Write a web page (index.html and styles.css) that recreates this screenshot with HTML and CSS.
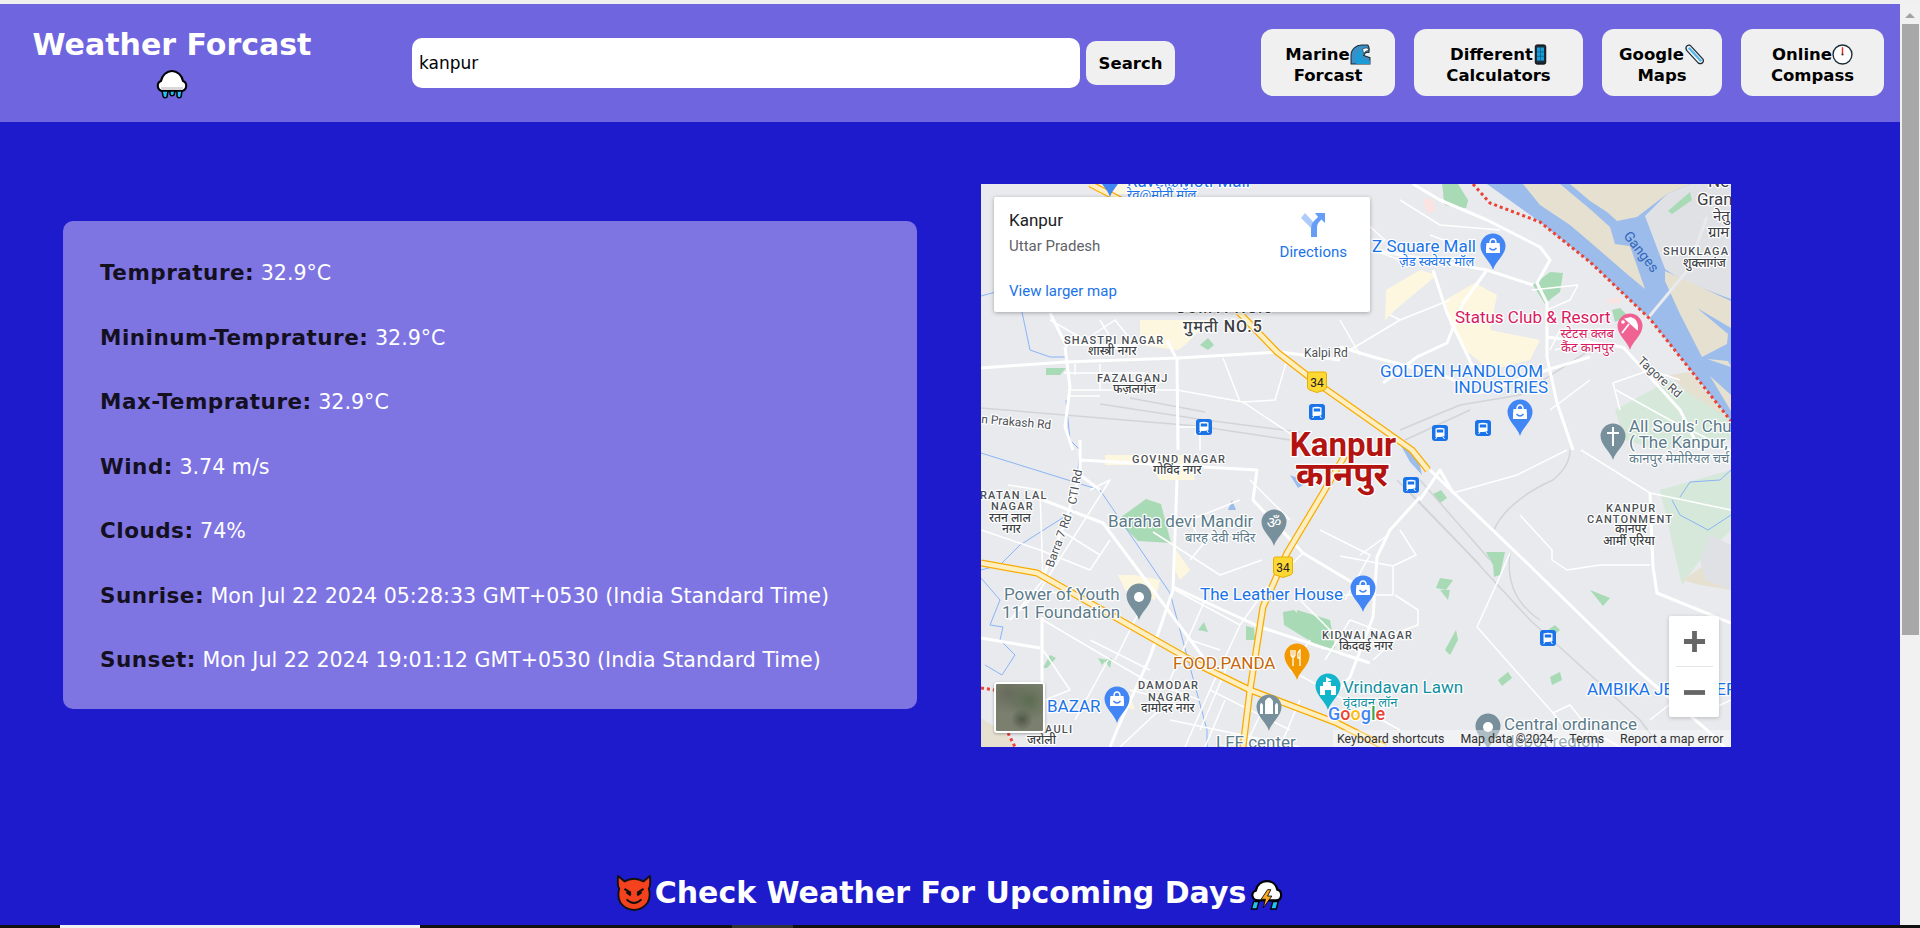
FILE: index.html
```html
<!DOCTYPE html>
<html lang="en">
<head>
    <meta charset="UTF-8">
    <meta name="viewport" content="width=device-width, initial-scale=1.0">
    <title>Weather Forcast</title>
    <link rel="stylesheet" href="styles.css">
</head>
<body>
    <!-- shared map pins -->
    <svg class="defs" width="0" height="0">
        <defs>
            <path id="pin" d="M0 24C-2 16-12.500 9-12.500 0A12.500 12.500 0 0 1 12.500 0C12.500 9 2 16 0 24Z"/>
            <g id="station">
                <rect x="-8" y="-8" width="16" height="16" rx="3" fill="#1a73e8"/>
                <path d="M-4.500-4.500Q0-6 4.500-4.500V3Q4.500 4-4.500 4Q-4.500 4-4.500 3Z" fill="#fff"/>
                <rect x="-3.200" y="-3.500" width="6.400" height="3" fill="#1a73e8"/>
                <path d="M-3 4-4.500 6M3 4 4.500 6" stroke="#fff" stroke-width="1"/>
            </g>
            <g id="shop">
                <path d="M-6.500-6H6.500L7-1.500V4H-7V-1.500Z" fill="#fff"/>
                <path d="M-3-6Q-3-10 0-10Q3-10 3-6" fill="none" stroke="#fff" stroke-width="1.500"/>
                <path d="M-3.500-1Q0 3 3.500-1" fill="none" stroke="#4285f4" stroke-width="1.400"/>
            </g>
            <g id="shield">
                <path d="M-9.500-8Q-9.500-10-7.500-10H7.500Q9.500-10 9.500-8V5Q9.500 7 7.500 8L0 10.500-7.500 8Q-9.500 7-9.500 5Z" fill="#fdd835" stroke="#e6b000"/>
            </g>
        </defs>
    </svg>

    <div class="screen">
        <div class="content">
            <header class="topbar">
                <div class="brand">
                    <h1>Weather Forcast</h1>
                    <svg class="emoji-rain" viewBox="0 0 32 30">
                        <path d="M7 21C1 21 0 13 5 11C6 5 11 1 16 1C21 1 26 5 27 11C32 13 31 21 25 21Z" fill="#fff" stroke="#000" stroke-width="2"/>
                        <path d="M5 17H27V20H5Z" fill="#d8d8d8"/>
                        <path d="M6 21H12L11 27Q8 29 7 26ZM14 21H19L18 25Q15 27 14 24ZM21 21H26L25 27Q22 29 21 26Z" fill="#20c4f0" stroke="#000" stroke-width="1.500"/>
                    </svg>
                </div>
                <form class="search">
                    <input class="search-input" type="text" value="kanpur">
                    <button class="search-btn" type="button">Search</button>
                </form>
                <nav class="links">
                    <a class="link-btn link-marine">
                        <span class="link-line">Marine<svg class="emoji" viewBox="0 0 20 20">
                            <path d="M1 19V11C1 5 6 1 11 1H17Q19 4 18 8H15L13 11L19 13V19Z" fill="#3a8fc4" stroke="#1c2b36" stroke-width="1"/>
                            <path d="M6 18C4 12 7 6 13 5Q10 9 11 13Q13 16 19 16V19H6Z" fill="#1b9bd8"/>
                            <path d="M12 5Q17 2 18 6Q15 6 13 9Z" fill="#fff" stroke="#1c2b36" stroke-width=".6"/>
                        </svg></span>
                        <span class="link-line">Forcast</span>
                    </a>
                    <a class="link-btn link-calc">
                        <span class="link-line">Different<svg class="emoji emoji-phone" viewBox="0 0 14 24">
                            <rect x="1" y="1" width="12" height="22" rx="2" fill="#1c2b36" stroke="#000"/>
                            <rect x="3" y="4" width="8" height="15" fill="#1b9bd8"/>
                            <path d="M7 4V19M3 9H11M3 14H11" stroke="#0a5f88" stroke-width=".8"/>
                        </svg></span>
                        <span class="link-line">Calculators</span>
                    </a>
                    <a class="link-btn link-maps">
                        <span class="link-line">Google<svg class="emoji" viewBox="0 0 22 22">
                            <path d="M3 2Q6 0 8 3L20 16Q21 19 19 20Q17 21 15 20L3 7Q1 4 3 2Z" fill="#eef3f6" stroke="#1c2b36" stroke-width="1.300"/>
                            <path d="M5 4 18 18" stroke="#4fb6e8" stroke-width="2.400"/>
                        </svg></span>
                        <span class="link-line">Maps</span>
                    </a>
                    <a class="link-btn link-compass">
                        <span class="link-line">Online<svg class="emoji" viewBox="0 0 20 20">
                            <circle cx="10" cy="10" r="9" fill="#fff" stroke="#1c2b36" stroke-width="1.300"/>
                            <path d="M10 3V10" stroke="#e0302a" stroke-width="1.400"/>
                            <circle cx="10" cy="10" r="1" fill="#333"/>
                        </svg></span>
                        <span class="link-line">Compass</span>
                    </a>
                </nav>
            </header>

            <main class="main">
                <section class="panel">
                    <p class="row"><b>Temprature:</b> 32.9°C</p>
                    <p class="row"><b>Mininum-Temprature:</b> 32.9°C</p>
                    <p class="row"><b>Max-Temprature:</b> 32.9°C</p>
                    <p class="row"><b>Wind:</b> 3.74 m/s</p>
                    <p class="row"><b>Clouds:</b> 74%</p>
                    <p class="row"><b>Sunrise:</b> Mon Jul 22 2024 05:28:33 GMT+0530 (India Standard Time)</p>
                    <p class="row"><b>Sunset:</b> Mon Jul 22 2024 19:01:12 GMT+0530 (India Standard Time)</p>
                </section>

                <section class="map">
                    <svg class="map-art" viewBox="981 184 750 563">
                        <rect x="981" y="184" width="750" height="563" fill="#e8eaed"/>

                        <!-- river and land -->
                        <path class="water" d="M1487 184L1540 222L1590 262L1650 319L1731 421V184Z"/>
                        <path class="sand" d="M1523 184H1560L1590 209L1610 227L1615 244L1630 246L1645 289L1627 274L1590 242L1570 225L1540 205Z"/>
                        <path class="sand" d="M1570 184H1690L1667 194L1637 217L1617 221L1607 212L1590 201Z"/>
                        <path class="land" d="M1645 216L1667 194L1690 184H1731V299L1683 281L1665 269L1662 261Z"/>
                        <path class="sand" d="M1665 271L1731 301V328L1697 308L1728 334L1727 344L1702 357L1680 314L1665 281Z"/>
                        <path class="sand" d="M1707 359L1728 361L1731 367Z"/>
                        <path class="sand" d="M1710 376L1731 395V411Z"/>
                        <path class="sand" d="M1670 375L1690 372L1725 415L1731 425L1700 405Z"/>
                        <path class="water" d="M1398 440L1417 452L1422 475L1410 462Z"/>
                        <path class="water" d="M1290 475L1308 482L1298 488Z"/>
                        <path class="water" d="M1232 500L1236 510H1228Z"/>
                        <path class="pink-patch" d="M1607 300L1618 297L1622 302L1610 304ZM1423 200L1432 198L1436 210L1427 214Z"/>

                        <!-- urban patches -->
                        <path class="urban" d="M1386 290L1420 270L1437 275L1395 310L1385 320ZM1445 300L1475 283L1497 295L1490 330L1540 340L1530 360L1490 370L1465 350L1450 325Z"/>
                        <path class="urban" d="M1090 184H1160L1175 194H1100Z"/>
                        <path class="urban" d="M1140 320H1210L1185 345L1178 350L1140 345Z"/>
                        <path class="urban" d="M1105 455H1190L1195 480H1160L1150 465H1105Z"/>
                        <path class="urban" d="M1118 575L1135 575L1160 580L1155 600L1125 590Z"/>
                        <path class="urban" d="M1176 550L1190 570L1180 580L1175 570Z"/>
                        <path class="urban" d="M1120 690L1130 695L1135 710L1120 705Z"/>
                        <path class="park-pale" d="M1615 410L1670 380L1700 400L1731 420V440L1660 450L1625 440Z"/>
                        <path class="park-pale" d="M1660 490L1731 470V530L1700 560L1682 585Z"/>
                        <path class="sand" d="M1683 580L1705 565L1731 580V590L1700 585Z"/>
                        <path class="land" d="M1700 560L1710 535L1731 545V590L1705 580Z"/>

                        <!-- parks -->
                        <path class="park" d="M1443 195L1455 184L1468 200L1466 208L1445 205Z"/>
                        <path class="park" d="M1533 285L1550 272L1563 273L1560 292L1552 298L1545 304Z"/>
                        <path class="park" d="M1117 520L1146 499L1161 504L1171 543L1138 541Z"/>
                        <path class="park" d="M1283 612L1294 610L1340 655L1325 650L1284 625Z"/>
                        <path class="park" d="M1297 610L1330 620L1335 648L1298 630Z"/>
                        <path class="park" d="M1486 552L1505 552L1500 575L1494 577L1493 565Z"/>
                        <path class="park" d="M1440 578L1453 580L1446 590L1436 588Z"/>
                        <path class="park" d="M1440 590L1450 590L1448 600Z"/>
                        <path class="park" d="M1590 590L1610 598L1603 606Z"/>
                        <path class="park" d="M1433 494L1441 490L1447 498L1440 503Z"/>
                        <path class="park" d="M1445 650L1456 630L1458 640L1450 655Z"/>
                        <path class="park" d="M1555 625L1560 630L1552 637L1545 632Z"/>
                        <path class="park" d="M1498 680L1508 672L1512 678L1502 686Z"/>
                        <path class="park" d="M1550 677L1560 672L1562 680L1552 685Z"/>
                        <path class="park" d="M1043 668L1050 655L1056 658L1047 668Z"/>
                        <path class="park" d="M1104 660L1112 658L1110 668Z"/>
                        <path class="park" d="M1098 658L1106 660L1102 665Z"/>
                        <path class="park" d="M1198 630L1204 622L1208 632Z"/>
                        <path class="park" d="M1246 640L1255 640L1254 628L1246 626Z"/>
                        <path class="park" d="M1046 368H1066L1060 375H1046Z"/>
                        <path class="park" d="M1200 345L1208 338L1214 345L1208 350Z"/>
                        <path class="park" d="M1442 184H1458L1468 200L1466 208L1445 205Z"/>
                        <path class="park" d="M1668 211L1690 192L1692 200L1672 214Z"/>
                        <path class="park" d="M1612 310L1620 308L1628 316L1615 322Z"/>

                        <!-- railway -->
                        <g class="rail">
                            <path d="M981 408L1197 426L1290 440"/>
                            <path d="M1100 404L1205 420L1300 432"/>
                            <path d="M1130 398L1205 412"/>
                            <path d="M1397 480L1470 555L1530 620L1640 720L1660 747"/>
                            <path d="M1403 485L1480 565"/>
                            <path d="M1420 480L1490 560"/>
                            <path d="M1493 533C1500 510 1530 490 1553 480C1565 470 1570 460 1570 450"/>
                            <path d="M1510 553C1505 590 1525 610 1540 620"/>
                            <path d="M1400 430L1460 405L1520 395L1590 350"/>
                            <path d="M1405 440L1470 410"/>
                        </g>

                        <!-- thin streams -->
                        <g class="stream">
                            <path d="M981 296L1003 290M1022 312L1030 350L1050 357H1067"/>
                            <path d="M1066 400L1070 440L1080 450L1078 470"/>
                            <path d="M981 453L1100 490L1170 593L1207 730V747"/>
                            <path d="M1075 510L1020 545L1000 565L981 570"/>
                            <path d="M981 578L1000 600L990 625L1003 627L1000 640L1015 655L1002 675L985 665"/>
                            <path d="M1680 497L1690 482L1720 480L1731 470M1672 500L1680 515L1708 530L1731 515"/>
                        </g>

                        <!-- streets -->
                        <g class="road">
                            <path d="M981 368L1065 362L1178 358L1280 352L1340 360"/>
                            <path d="M1065 347L1070 387L1065 427L1073 450"/>
                            <path d="M1167 340L1177 360L1178 450"/>
                            <path d="M1050 313L1067 347"/>
                            <path d="M1413 184L1440 200L1487 220L1540 247L1550 260L1537 283L1547 303L1547 357L1557 403L1573 450"/>
                            <path d="M1373 250L1487 270L1533 285"/>
                            <path d="M1487 270L1463 303L1447 343L1417 357L1383 383"/>
                            <path d="M1433 270L1447 313L1473 367"/>
                            <path d="M1340 347L1377 358L1447 377L1480 393L1547 370L1590 357"/>
                            <path d="M1623 347L1680 410L1700 450"/>
                            <path d="M1547 337L1623 347"/>
                            <path d="M1430 470L1527 563L1637 670L1707 730L1725 747"/>
                            <path d="M1420 497L1390 530L1377 557L1373 617L1350 677L1330 700"/>
                            <path d="M1650 493L1653 567L1657 593L1731 623"/>
                            <path d="M1177 480L1173 590L1150 657L1117 730L1110 747"/>
                            <path d="M1043 500L1103 523L1203 657"/>
                            <path d="M1173 587L1260 627L1370 663"/>
                            <path d="M1043 577L1067 517L1080 473"/>
                            <path d="M1080 460L1257 470L1253 500L1303 553L1370 593"/>
                            <path d="M1080 440V475L1100 490"/>
                            <path d="M1042 617V730"/>
                            <path d="M981 638L1040 648"/>
                            <path d="M1420 500L1440 470L1453 493"/>
                        </g>
                        <path class="bridge" d="M1643 324L1687 271L1707 217"/>
                        <g class="road-thin">
                            <path d="M1070 390H1177L1243 402L1300 440"/>
                            <path d="M1064 373H1145M1070 396H1100M1100 364V390M1075 364V375"/>
                            <path d="M1223 358L1240 402M1287 360L1275 400L1243 402"/>
                            <path d="M1177 427H1198L1195 435M1200 450V430"/>
                            <path d="M1050 320L1085 340L1115 320L1135 345M1070 345H1135M1100 320L1115 345"/>
                            <path d="M1340 200L1385 240L1373 250L1400 260M1400 200L1440 225L1500 230M1430 235L1470 250"/>
                            <path d="M1400 320L1350 350M1340 320L1360 355M1450 300L1400 320L1390 315"/>
                            <path d="M1532 290L1578 285L1570 300L1547 310M1555 350L1590 340M1560 330L1550 350"/>
                            <path d="M1613 383L1650 370L1680 380M1616 390L1670 420L1731 450M1550 410L1590 380M1613 383L1620 410"/>
                            <path d="M1453 493L1517 475L1567 450M1581 450L1650 493M1650 493L1731 510"/>
                            <path d="M1477 627L1497 583L1510 553M1477 627L1553 713L1567 730M1520 515L1552 550V560L1567 570L1600 565L1650 565"/>
                            <path d="M1340 556L1393 566L1416 555L1400 530M1393 566V595H1340M1395 595L1418 610V625L1390 635L1350 620M1400 635L1373 660"/>
                            <path d="M1553 713L1570 705L1590 730L1570 747M1650 720L1675 700M1590 730L1620 747M1700 715L1731 700"/>
                            <path d="M1090 490L1110 480L1040 590M1008 485L1040 490L1043 580L1010 620"/>
                            <path d="M981 530L1040 550L1090 570L1110 540M1060 530L1100 555M1040 590L1095 600M1010 620L1040 590"/>
                            <path d="M1043 620L1145 680L1200 700M1043 650L1070 690L1045 700M1090 640L1150 670M1108 660L1075 720M1140 610L1115 660"/>
                            <path d="M1175 590L1240 625L1210 690L1185 747M1205 600L1170 680M1240 625L1265 590L1303 553M1190 640L1220 650M1230 660L1200 730"/>
                            <path d="M1210 690L1290 730M1225 700L1205 747M1260 715L1245 747M1300 700L1280 747M1290 670L1400 730M1310 640L1290 670M1350 620L1325 660"/>
                            <path d="M1240 500L1190 520L1200 540M1320 530L1370 555L1345 600M1360 555L1388 535M1300 600L1340 640"/>
                            <path d="M1153 532L1220 575L1262 560M1215 530L1190 560M1290 520L1250 480"/>
                            <path d="M1130 690L1170 700L1120 747M1170 720L1300 747"/>
                        </g>

                        <!-- red border dots -->
                        <path class="border" d="M1473 184L1490 203L1540 222L1590 262L1650 319L1731 421"/>
                        <path class="sand" d="M981 718L1005 733L1015 747H981Z"/>
                        <path class="border" d="M981 688L1002 691L1005 712M1008 733L1015 747"/>

                        <!-- highways -->
                        <g class="hw-out">
                            <path d="M1090 184L1140 210L1277 352L1317 383L1412 450L1428 470"/>
                            <path d="M1243 747L1250 690L1263 607L1287 553L1323 493L1345 455"/>
                            <path d="M981 563L1037 573L1203 667L1250 690L1337 723L1385 747"/>
                        </g>
                        <g class="hw-in">
                            <path d="M1090 184L1140 210L1277 352L1317 383L1412 450L1428 470"/>
                            <path d="M1243 747L1250 690L1263 607L1287 553L1323 493L1345 455"/>
                            <path d="M981 563L1037 573L1203 667L1250 690L1337 723L1385 747"/>
                        </g>

                        <!-- labels under the card -->
                        <text class="lab-blue" x="1127" y="187">Rave@Moti Mall</text>
                        <text class="lab-blue-sm" x="1127" y="199">रेव@मोती मॉल</text>
                        <text class="lab-hood-lg" x="1175" y="313">GUMTI NO.5</text>
                        <text class="lab-hood-lg" x="1183" y="332">गुमती NO.5</text>
                        <use href="#pin" x="1110" y="173" class="pin-blue"/>
                        <use href="#shop" x="1110" y="176"/>

                        <!-- neighbourhood labels -->
                        <text class="lab-hood" x="1064" y="344">SHASTRI NAGAR</text>
                        <text class="lab-hood-hi" x="1088" y="355">शास्त्री नगर</text>
                        <text class="lab-hood" x="1097" y="382">FAZALGANJ</text>
                        <text class="lab-hood-hi" x="1113" y="393">फज़लगंज</text>
                        <text class="lab-road" x="981" y="423" transform="rotate(5 981 423)">n Prakash Rd</text>
                        <text class="lab-road" x="1304" y="357">Kalpi Rd</text>
                        <text class="lab-hood" x="1132" y="463">GOVIND NAGAR</text>
                        <text class="lab-hood-hi" x="1153" y="474">गोविंद नगर</text>
                        <text class="lab-hood" x="980" y="499">RATAN LAL</text>
                        <text class="lab-hood" x="991" y="510">NAGAR</text>
                        <text class="lab-hood-hi" x="989" y="522">रतन लाल</text>
                        <text class="lab-hood-hi" x="1002" y="533">नगर</text>
                        <text class="lab-road" x="1053" y="568" transform="rotate(-70 1053 568)">Barra 7 Rd</text>
                        <text class="lab-road" x="1076" y="505" transform="rotate(-80 1076 505)">CTI Rd</text>
                        <text class="lab-hood" x="1322" y="639">KIDWAI NAGAR</text>
                        <text class="lab-hood-hi" x="1339" y="650">किदवई नगर</text>
                        <text class="lab-hood" x="1138" y="689">DAMODAR</text>
                        <text class="lab-hood" x="1148" y="701">NAGAR</text>
                        <text class="lab-hood-hi" x="1141" y="712">दामोदर नगर</text>
                        <text class="lab-hood" x="1045" y="733">AULI</text>
                        <text class="lab-hood-hi" x="1027" y="744">जरोली</text>
                        <text class="lab-hood" x="1606" y="512">KANPUR</text>
                        <text class="lab-hood" x="1587" y="523">CANTONMENT</text>
                        <text class="lab-hood-hi" x="1615" y="533">कानपुर</text>
                        <text class="lab-hood-hi" x="1603" y="545">आर्मी एरिया</text>
                        <text class="lab-hood" x="1663" y="255">SHUKLAGA</text>
                        <text class="lab-hood-hi" x="1683" y="267">शुक्लागंज</text>
                        <text class="lab-road" x="1637" y="362" transform="rotate(42 1637 362)">Tagore Rd</text>
                        <text class="lab-river" x="1623" y="236" transform="rotate(52 1623 236)">Ganges</text>
                        <text class="lab-dark" x="1708" y="187">Ne</text>
                        <text class="lab-dark" x="1697" y="205">Gran</text>
                        <text class="lab-dark-sm" x="1713" y="221">नेतु</text>
                        <text class="lab-dark-sm" x="1708" y="237">ग्राम</text>

                        <!-- places -->
                        <text class="lab-blue" x="1372" y="252">Z Square Mall</text>
                        <text class="lab-blue-sm" x="1399" y="266">ज़ेड स्क्वेयर मॉल</text>
                        <use href="#pin" x="1493" y="246" class="pin-blue"/>
                        <use href="#shop" x="1493" y="249"/>

                        <text class="lab-pink" x="1455" y="323">Status Club &amp; Resort</text>
                        <text class="lab-pink-sm" x="1614" y="338" text-anchor="end">स्टेटस क्लब</text>
                        <text class="lab-pink-sm" x="1614" y="352" text-anchor="end">कैंट कानपुर</text>
                        <use href="#pin" x="1630" y="326" class="pin-pink"/>
                        <path d="M1622 333L1629 324M1626 319L1637 329Q1638 320 1631 318Z" stroke="#fff" stroke-width="1.800" fill="#fff"/>
                        <circle cx="1623" cy="322" r="1.800" fill="#fff"/>

                        <text class="lab-blue" x="1380" y="377">GOLDEN HANDLOOM</text>
                        <text class="lab-blue" x="1548" y="393" text-anchor="end">INDUSTRIES</text>
                        <use href="#pin" x="1520" y="412" class="pin-blue"/>
                        <use href="#shop" x="1520" y="415"/>

                        <text class="lab-slate" x="1629" y="432">All Souls' Chu</text>
                        <text class="lab-slate" x="1629" y="448">( The Kanpur,</text>
                        <text class="lab-slate-sm" x="1629" y="463">कानपुर मेमोरियल चर्च</text>
                        <use href="#pin" x="1613" y="436" class="pin-slate"/>
                        <path d="M1613 427V446M1607 433H1619" stroke="#fff" stroke-width="2"/>

                        <text class="lab-city" x="1343" y="456" text-anchor="middle">Kanpur</text>
                        <text class="lab-city" x="1342" y="486" text-anchor="middle">कानपुर</text>

                        <text class="lab-slate" x="1108" y="527">Baraha devi Mandir</text>
                        <text class="lab-slate-sm" x="1185" y="542">बारह देवी मंदिर</text>
                        <use href="#pin" x="1274" y="522" class="pin-slate"/>
                        <text class="pin-om" x="1274" y="528" text-anchor="middle">ॐ</text>

                        <text class="lab-slate" x="1004" y="600">Power of Youth</text>
                        <text class="lab-slate" x="1002" y="618">111 Foundation</text>
                        <use href="#pin" x="1139" y="596" class="pin-slate"/>
                        <circle cx="1139" cy="597" r="5" fill="#fff"/>

                        <text class="lab-blue" x="1200" y="600">The Leather House</text>
                        <use href="#pin" x="1363" y="588" class="pin-blue"/>
                        <use href="#shop" x="1363" y="591"/>

                        <text class="lab-orange" x="1173" y="669">FOOD.PANDA</text>
                        <use href="#pin" x="1297" y="656" class="pin-orange"/>
                        <path d="M1293 650V656M1291 650V654Q1291 657 1293 657Q1295 657 1295 654V650M1293 657V666M1300 650Q1297 652 1298 658H1300ZM1300 650V666" stroke="#fff" stroke-width="1.300" fill="none"/>

                        <text class="lab-teal" x="1343" y="693">Vrindavan Lawn</text>
                        <text class="lab-teal-sm" x="1343" y="707">वृंदावन लॉन</text>
                        <use href="#pin" x="1328" y="686" class="pin-teal"/>
                        <path d="M1320 695V686H1323V682H1326V677L1332 680L1327 682H1331V686H1336V695H1331V690H1325V695Z" fill="#fff"/>

                        <text class="lab-blue" x="1047" y="712">BAZAR</text>
                        <use href="#pin" x="1117" y="699" class="pin-blue"/>
                        <use href="#shop" x="1117" y="702"/>

                        <use href="#pin" x="1269" y="707" class="pin-slate"/>
                        <path d="M1260 714V705Q1261 701 1263 705V714ZM1265 714V701Q1269 694 1273 701V714ZM1275 714V705Q1277 701 1278 705V714Z" fill="#fff"/>

                        <text class="lab-slate" x="1216" y="748">LFF center</text>
                        <use href="#pin" x="1195" y="762" class="pin-slate"/>

                        <text class="lab-slate" x="1504" y="730">Central ordinance</text>
                        <text class="lab-slate" x="1505" y="747">depot region</text>
                        <use href="#pin" x="1488" y="726" class="pin-slate"/>
                        <circle cx="1488" cy="727" r="5" fill="#fff"/>

                        <text class="lab-blue" x="1587" y="695">AMBIKA JEWELLERS</text>

                        <text class="lab-google" x="1328" y="720"><tspan fill="#4285f4">G</tspan><tspan fill="#ea4335">o</tspan><tspan fill="#fbbc05">o</tspan><tspan fill="#4285f4">g</tspan><tspan fill="#34a853">l</tspan><tspan fill="#ea4335">e</tspan></text>

                        <!-- road signs and stations -->
                        <use href="#shield" x="1317" y="382"/>
                        <text class="lab-shield" x="1317" y="387">34</text>
                        <use href="#shield" x="1283" y="567"/>
                        <text class="lab-shield" x="1283" y="572">34</text>
                        <use href="#station" x="1204" y="427"/>
                        <use href="#station" x="1317" y="412"/>
                        <use href="#station" x="1440" y="433"/>
                        <use href="#station" x="1483" y="428"/>
                        <use href="#station" x="1411" y="485"/>
                        <use href="#station" x="1548" y="638"/>
                    </svg>

                    <div class="map-card">
                        <div class="map-card-text">
                            <div class="place-name">Kanpur</div>
                            <div class="place-state">Uttar Pradesh</div>
                            <a class="map-link larger">View larger map</a>
                        </div>
                        <a class="map-link directions">
                            <svg class="dir-icon" viewBox="0 0 24 24">
                                <path d="M0 5 4 0 16 13V24H10V15Z" fill="#aecbfa"/>
                                <path d="M10 24V15Q10 11 13 8L17 4 14 0H24V10L20.500 6.500 18 9Q16 11 16 14V24Z" fill="#669df6"/>
                            </svg>
                            Directions
                        </a>
                    </div>

                    <div class="map-thumb"></div>

                    <div class="zoom-box">
                        <svg class="zoom-glyph" viewBox="0 0 24 24"><path d="M9.500 1H14.500V9.500H23V14.500H14.500V23H9.500V14.500H1V9.500H9.500Z"/></svg>
                        <div class="zoom-line"></div>
                        <svg class="zoom-glyph" viewBox="0 0 24 24"><path d="M1 9.500H23V14.500H1Z"/></svg>
                    </div>

                    <div class="map-foot">
                        <span>Keyboard shortcuts</span>
                        <span>Map data ©2024</span>
                        <span>Terms</span>
                        <span>Report a map error</span>
                    </div>
                </section>
            </main>

            <h2 class="upcoming">
                <svg class="emoji-imp" viewBox="0 0 34 34">
                    <path d="M2 1L8 6Q17 1 26 6L32 1Q33 10 31 13Q33 20 30 26Q25 33 17 33Q9 33 4 26Q1 20 3 13Q1 10 2 1Z" fill="#f4411e" stroke="#111" stroke-width="1.800"/>
                    <path d="M8 13 14 17M26 13 20 17" stroke="#111" stroke-width="2"/>
                    <path d="M10 16 14 19M24 16 20 19" stroke="#111" stroke-width="2.400"/>
                    <path d="M10 23Q17 30 24 23" fill="none" stroke="#111" stroke-width="1.800"/>
                </svg>Check Weather For Upcoming Days<svg class="emoji-storm" viewBox="0 0 32 28">
                    <path d="M8 19C2 19 1 11 6 10C7 4 12 1 16 1C21 1 25 4 26 9C31 10 31 19 25 19Z" fill="#fff" stroke="#000" stroke-width="2"/>
                    <path d="M17 9 11 18H15L13 26 21 15H17L20 9Z" fill="#f9a825" stroke="#000" stroke-width=".8"/>
                    <path d="M4 20H9L7 27H2ZM22 20H27L25 27H20Z" fill="#20c4f0" stroke="#000" stroke-width="1.300"/>
                </svg>
            </h2>
        </div>

        <aside class="scrollbar">
            <div class="scroll-arrow"></div>
            <div class="scroll-thumb"></div>
        </aside>
    </div>

    <footer class="taskbar">
        <div class="tab-white"></div>
        <div class="tab-grey"></div>
    </footer>
</body>
</html>
```

FILE: styles.css
```css
* {
    box-sizing: border-box;
}

body {
    margin: 0;
    height: 100vh;
    overflow: hidden;
    display: flex;
    flex-direction: column;
    font-family: "DejaVu Sans", Verdana, sans-serif;
    background-color: #f0f0f0;
    color: #fff;
}

.defs {
    position: absolute;
}

.screen {
    flex: 1;
    display: flex;
    min-height: 0;
    padding-top: 4px;
}

.content {
    flex: 1;
    display: flex;
    flex-direction: column;
    background-color: #1d1bcb;
}

/* top bar */
.topbar {
    height: 118px;
    display: flex;
    align-items: center;
    background-color: #6f65de;
    padding: 0 16px 0 32px;
}

.brand {
    width: 280px;
    display: flex;
    flex-direction: column;
    align-items: center;
    align-self: flex-start;
    padding-top: 23px;
}

.brand h1 {
    margin: 0;
    font-size: 30px;
    line-height: 36px;
    white-space: nowrap;
}

.emoji-rain {
    width: 32px;
    height: 30px;
    margin-top: 7px;
}

.search {
    display: flex;
    align-items: center;
    gap: 6px;
    margin-left: 100px;
}

.search-input {
    width: 668px;
    height: 50px;
    border: none;
    border-radius: 10px;
    padding: 0 7px;
    font-family: inherit;
    font-size: 17px;
    color: #000;
    background-color: #fff;
}

.search-btn {
    width: 89px;
    height: 44px;
    border: none;
    border-radius: 10px;
    font-family: inherit;
    font-size: 16.500px;
    font-weight: bold;
    color: #000;
    background-color: #f0f0f0;
}

.links {
    margin-left: auto;
    display: flex;
    gap: 19px;
    margin-top: -2px;
}

.link-btn {
    height: 67px;
    padding-top: 6px;
    border-radius: 12px;
    background-color: #f0f0f0;
    color: #000;
    font-size: 16.500px;
    font-weight: bold;
    line-height: 21px;
    display: flex;
    flex-direction: column;
    align-items: center;
    justify-content: center;
}

.link-marine { width: 134px; }
.link-calc { width: 169px; }
.link-maps { width: 120px; }
.link-compass { width: 143px; }

.link-line {
    display: flex;
    align-items: center;
    height: 21px;
}

.emoji {
    width: 21px;
    height: 21px;
}

.emoji-phone {
    width: 13px;
    margin-left: 1px;
}

/* weather + map row */
.main {
    display: flex;
    align-items: flex-start;
    padding: 62px 0 0 63px;
}

.panel {
    width: 854px;
    height: 488px;
    margin-top: 37px;
    padding: 20px 37px;
    border-radius: 10px;
    background-color: #7e75e3;
}

.row {
    margin: 0;
    font-size: 20.600px;
    line-height: 64.500px;
    white-space: nowrap;
}

.row b {
    font-size: 21.500px;
    letter-spacing: 0.500px;
    color: #14101f;
}

/* map */
.map {
    position: relative;
    width: 750px;
    height: 563px;
    margin-left: 64px;
    overflow: hidden;
    font-family: Roboto, sans-serif;
}

.map-art {
    display: block;
    width: 750px;
    height: 563px;
}

.map-art text {
    font-family: Roboto, "Noto Sans", sans-serif;
    paint-order: stroke;
    stroke: #fff;
    stroke-width: 2.500px;
    stroke-linejoin: round;
}

.water { fill: #9cbcec; }
.sand { fill: #e6e0d0; }
.land { fill: #dfe1e5; }
.urban { fill: #fef7e0; }
.park { fill: #a8dab5; }
.park-pale { fill: #d5e8da; }
.pink-patch { fill: #fbe3e1; }

.rail, .stream, .road, .road-thin, .bridge, .hw-out, .hw-in, .border {
    fill: none;
    stroke-linejoin: round;
}

.rail { stroke: #d2d4d8; stroke-width: 1.500px; }
.stream { stroke: #8ab4f8; stroke-width: 1px; }
.road { stroke: #fff; stroke-width: 3px; }
.road-thin { stroke: #fff; stroke-width: 1.500px; }
.bridge { stroke: #e8eaed; stroke-width: 3px; }
.hw-out { stroke: #f9ab00; stroke-width: 7px; }
.hw-in { stroke: #feefc3; stroke-width: 4.500px; }

.border {
    stroke: #ea4335;
    stroke-width: 3px;
    stroke-dasharray: 3 3;
}

.pin-blue { fill: #4285f4; }
.pin-pink { fill: #f06292; }
.pin-slate { fill: #78909c; }
.pin-orange { fill: #f29900; }
.pin-teal { fill: #12b5cb; }

.map-art .lab-blue { font-size: 17px; fill: #1a73e8; }
.map-art .lab-blue-sm { font-size: 13px; fill: #1a73e8; }
.map-art .lab-pink { font-size: 17px; fill: #d81b60; }
.map-art .lab-pink-sm { font-size: 13px; fill: #d81b60; }
.map-art .lab-slate { font-size: 17px; fill: #5b7b8a; }
.map-art .lab-slate-sm { font-size: 13px; fill: #5b7b8a; }
.map-art .lab-orange { font-size: 17px; fill: #c5680a; }
.map-art .lab-teal { font-size: 17px; fill: #0f8f9f; }
.map-art .lab-teal-sm { font-size: 13px; fill: #0f8f9f; }
.map-art .lab-hood { font-size: 11px; font-weight: 500; letter-spacing: 1.200px; fill: #4d5156; }
.map-art .lab-hood-hi { font-size: 12px; font-weight: 500; fill: #3c4043; }
.map-art .lab-hood-lg { font-size: 16px; font-weight: 500; letter-spacing: 1px; fill: #3c4043; }
.map-art .lab-road { font-size: 12px; fill: #4d5156; }
.map-art .lab-river { font-size: 14px; fill: #3367b8; stroke: none; }
.map-art .lab-dark { font-size: 17px; fill: #3c4043; }
.map-art .lab-dark-sm { font-size: 15px; fill: #3c4043; }
.map-art .lab-city { font-size: 33px; font-weight: 700; fill: #b31412; }
.map-art .lab-shield { font-size: 12px; fill: #222; stroke: none; text-anchor: middle; }
.map-art .lab-google { font-size: 18px; font-weight: 500; }
.map-art .pin-om { font-size: 16px; fill: #fff; stroke: none; }

.map-card {
    position: absolute;
    left: 13px;
    top: 13px;
    width: 376px;
    height: 115px;
    padding: 14px 15px;
    display: flex;
    justify-content: space-between;
    background-color: #fff;
    border-radius: 2px;
    box-shadow: 0 1px 4px rgba(0, 0, 0, 0.3);
}

.place-name {
    font-size: 17px;
    line-height: 19px;
    color: #202124;
}

.place-state {
    margin-top: 7px;
    font-size: 15px;
    line-height: 19px;
    color: #5f6368;
}

.map-link {
    font-size: 15px;
    color: #1a73e8;
}

.larger {
    display: block;
    margin-top: 26px;
    line-height: 18px;
}

.directions {
    display: flex;
    flex-direction: column;
    align-items: center;
    gap: 6px;
    margin-right: 8px;
    padding-top: 2px;
}

.dir-icon {
    width: 24px;
    height: 24px;
}

.map-thumb {
    position: absolute;
    left: 13px;
    top: 498px;
    width: 51px;
    height: 51px;
    border: 2px solid #fff;
    border-radius: 3px;
    background-color: #7a7f6e;
    background-image: radial-gradient(circle at 70% 35%, #5c6b52 0, transparent 45%),
        radial-gradient(circle at 55% 75%, #4f5746 0, transparent 25%),
        radial-gradient(circle at 25% 20%, #666b5b 0, transparent 40%);
    box-shadow: 0 1px 3px rgba(0, 0, 0, 0.3);
}

.zoom-box {
    position: absolute;
    left: 688px;
    top: 432px;
    width: 50px;
    height: 101px;
    display: flex;
    flex-direction: column;
    align-items: center;
    padding-top: 14px;
    background-color: #fff;
    border-radius: 2px;
    box-shadow: 0 1px 4px rgba(0, 0, 0, 0.2);
}

.zoom-glyph {
    width: 23px;
    height: 23px;
    fill: #666;
}

.zoom-line {
    width: 37px;
    height: 1px;
    margin: 13px 0 14px;
    background-color: #e6e6e6;
}

.map-foot {
    position: absolute;
    left: 352px;
    right: 0;
    bottom: 0;
    height: 17px;
    display: flex;
    align-items: center;
    padding-left: 4px;
    gap: 16px;
    font-size: 12.400px;
    color: #333;
    background-color: rgba(255, 255, 255, 0.4);
    white-space: nowrap;
}

/* bottom heading */
.upcoming {
    display: flex;
    justify-content: center;
    align-items: center;
    margin: 128px 0 0;
    font-size: 30px;
    line-height: 36px;
}

.emoji-imp {
    width: 36px;
    height: 36px;
    margin-right: 3px;
}

.emoji-storm {
    width: 35px;
    height: 30px;
    margin-left: 3px;
    margin-top: 3px;
}

/* fake browser chrome */
.scrollbar {
    width: 20px;
    display: flex;
    flex-direction: column;
    align-items: center;
    background-color: #f1f1f1;
}

.scroll-arrow {
    margin-top: 9px;
    border-left: 5px solid transparent;
    border-right: 5px solid transparent;
    border-bottom: 5px solid #a3a3a3;
}

.scroll-thumb {
    width: 17px;
    height: 611px;
    margin-top: 6px;
    background-color: #a8a8a8;
}

.taskbar {
    height: 3px;
    display: flex;
    background-color: #111;
}

.tab-white {
    width: 360px;
    margin-left: 60px;
    background-color: #f0f0f0;
}

.tab-grey {
    width: 61px;
    margin-left: 312px;
    background-color: #333;
}
```
